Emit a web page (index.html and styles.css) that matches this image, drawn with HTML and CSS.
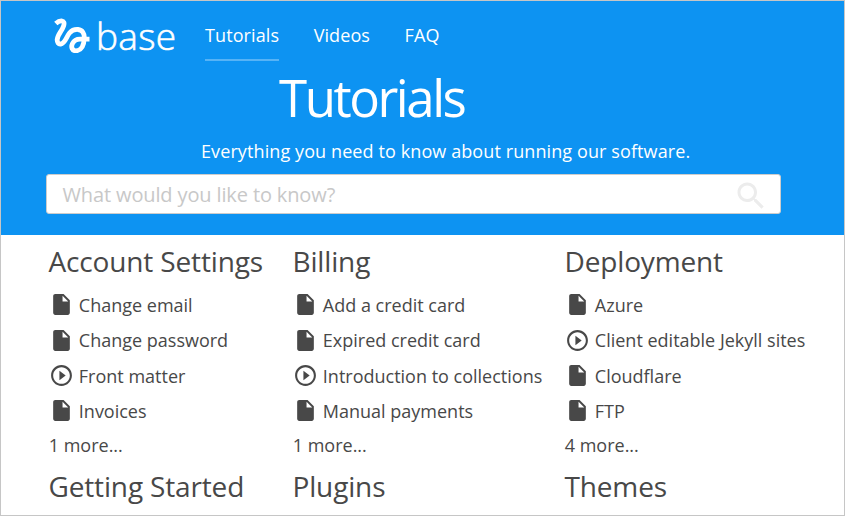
FILE: index.html
```html
<!DOCTYPE html>
<html lang="en"><head><meta charset="utf-8"><title>Tutorials</title><link rel="stylesheet" href="styles.css"></head>
<body>
<svg class="sprite" aria-hidden="true">
<symbol id="doc" viewBox="0 0 24 24"><path d="M6 2c-1.1 0-2 .9-2 2v16c0 1.1.9 2 2 2h12c1.100 0 2-.9 2-2V8l-6-6H6zm7 7V3.500L18.500 9H13z"/></symbol>
<symbol id="play" viewBox="0 0 24 24"><path d="M10 16.500l6-4.500-6-4.500v9zM12 2C6.480 2 2 6.480 2 12s4.480 10 10 10 10-4.480 10-10S17.520 2 12 2zm0 18c-4.410 0-8-3.590-8-8s3.590-8 8-8 8 3.590 8 8-3.590 8-8 8z"/></symbol>
</svg>
<div class="page">
<header class="hero">
<div class="top">
<a class="brand"><svg class="logo" viewBox="54 17 36 36"><path d="M55.800 23.600C57.500 22 59.500 20.700 61.500 20.800C64 21 64.600 23 63.600 26C62 31 57.500 34.500 57.200 39.500C57 42.500 58.500 44.300 60.700 44C65 43.500 66.500 36.500 69.500 33C72 30 75 29.300 78 29.500C82.500 30 84.500 33.500 84.300 38C84 45 81.500 50.500 76 50.800C72 51 70.800 47 72.500 43.500C74 40.500 76.500 39.200 80 39.200H89.500"/></svg><span>base</span></a>
<nav class="nav"><a class="active">Tutorials</a><a>Videos</a><a>FAQ</a></nav>
</div>
<h1>Tutorials</h1>
<p class="lead">Everything you need to know about running our software.</p>
<div class="search"><span>What would you like to know?</span><svg viewBox="0 0 24 24"><path d="M15.500 14h-.79l-.28-.27C15.410 12.590 16 11.110 16 9.500 16 5.910 13.090 3 9.500 3S3 5.910 3 9.500 5.910 16 9.500 16c1.610 0 3.090-.59 4.230-1.570l.27.28v.79l5 4.990L20.490 19l-4.990-5zm-6 0C7.010 14 5 11.990 5 9.500S7.010 5 9.500 5 14 7.010 14 9.500 11.990 14 9.500 14z"/></svg></div>
</header>
<main class="grid">
<section><h2>Account Settings</h2><ul><li><svg><use href="#doc"/></svg>Change email</li><li><svg><use href="#doc"/></svg>Change password</li><li><svg><use href="#play"/></svg>Front matter</li><li><svg><use href="#doc"/></svg>Invoices</li></ul><a class="more">1 more...</a></section>
<section><h2>Billing</h2><ul><li><svg><use href="#doc"/></svg>Add a credit card</li><li><svg><use href="#doc"/></svg>Expired credit card</li><li><svg><use href="#play"/></svg>Introduction to collections</li><li><svg><use href="#doc"/></svg>Manual payments</li></ul><a class="more">1 more...</a></section>
<section><h2>Deployment</h2><ul><li><svg><use href="#doc"/></svg>Azure</li><li><svg><use href="#play"/></svg>Client editable Jekyll sites</li><li><svg><use href="#doc"/></svg>Cloudflare</li><li><svg><use href="#doc"/></svg>FTP</li></ul><a class="more">4 more...</a></section>
<section><h2>Getting Started</h2></section>
<section><h2>Plugins</h2></section>
<section><h2>Themes</h2></section>
</main>
</div>
</body></html>
```
FILE: styles.css
```css
* { box-sizing: border-box; }
body { margin: 0; font-family: "Open Sans", sans-serif; color: #484848; }
.sprite { display: none; }
.page { width: 845px; height: 516px; border: 1px solid #c6c6c6; overflow: hidden; background: #fff; }
.hero { height: 234px; background: #0d93f2; color: #fff; }
.top { display: flex; height: 68px; padding-left: 53px; }
.brand { display: flex; width: 151px; padding-top: 16px; font-size: 37px; line-height: 38px; font-weight: 300; letter-spacing: .3px; -webkit-text-stroke: .6px #fff; }
.logo { width: 36px; height: 36px; margin-right: 6px; fill: none; stroke: #fff; stroke-width: 4.800; }
.nav { display: flex; align-items: flex-start; gap: 34.500px; padding-top: 22px; font-size: 18px; line-height: 24px; }
.nav a { height: 38px; letter-spacing: .1px; }
.nav .active { border-bottom: 2px solid #56b3f6; }
h1 { margin: -1px 0 0 278px; font-size: 51px; line-height: 58px; font-weight: 400; letter-spacing: -2.450px; }
.lead { margin: 13px 0 0 200px; font-size: 18px; line-height: 24px; letter-spacing: .1px; }
.search { display: flex; align-items: center; justify-content: space-between; width: 735px; height: 40px; margin: 11px 0 0 45px; padding: 0 11px 0 15.500px; border: 1px solid #ccc; border-radius: 3px; background: #fff; color: #c8c8c8; font-size: 20px; letter-spacing: -.13px; }
.search svg { width: 36px; height: 36px; margin-top: 3px; fill: #ececec; }
.grid { display: grid; grid-template-columns: 244px 272px 280px; padding: 9px 0 0 48px; white-space: nowrap; }
section { height: 225px; }
h2 { margin: 0 0 9px; font-size: 28px; line-height: 34px; font-weight: 400; letter-spacing: -.15px; text-indent: -.5px; }
ul { margin: 0; padding: 0; list-style: none; }
li { display: flex; align-items: center; height: 35.400px; font-size: 18px; text-indent: -.2px; }
li:nth-child(3) { padding-top: 1px; }
li svg { width: 25px; height: 25px; margin-right: 5px; fill: #484848; }
.more { display: block; font-size: 18px; line-height: 32px; text-indent: -.3px; }
```
